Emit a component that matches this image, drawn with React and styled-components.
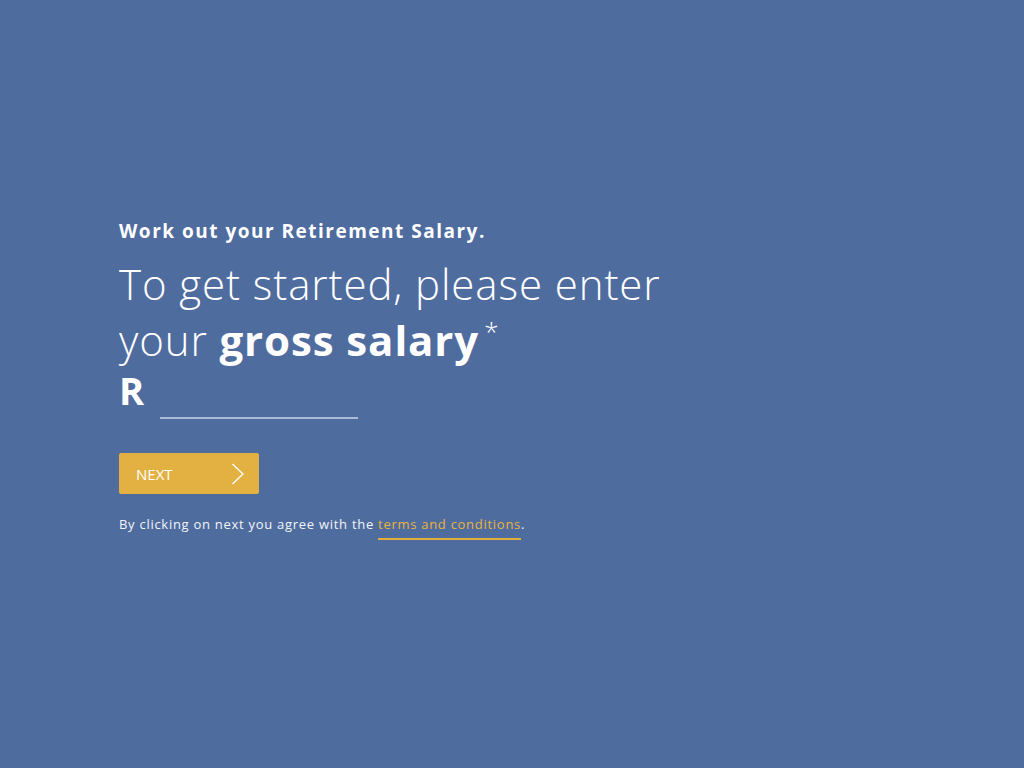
import React from "react";
import styled, { createGlobalStyle } from "styled-components";

const Global = createGlobalStyle`
  html, body { margin: 0; padding: 0; background: #4f6c9f; }
  body { font-family: "Open Sans", "Liberation Sans", sans-serif; color: #fff; }
`;

const Page = styled.main`
  min-height: 768px;
  box-sizing: border-box;
  padding: 218px 0 0 119px;
  display: flex;
  flex-direction: column;
  align-items: flex-start;
`;

const Kicker = styled.h2`
  margin: 0;
  font-size: 19px;
  font-weight: 700;
  letter-spacing: 1.5px;
  line-height: 26px;
`;

const Headline = styled.h1`
  margin: 12px 0 0 0;
  font-size: 42px;
  font-weight: 300;
  line-height: 56px;
  letter-spacing: 0.9px;
  strong { font-weight: 700; letter-spacing: 0.9px; }
  sup { font-size: 26px; font-weight: 300; vertical-align: 15px; line-height: 0; margin-left: 5px; }
`;

const AmountRow = styled.label`
  display: flex;
  align-items: flex-end;
  gap: 16px;
  margin-top: 2px;
`;

const Currency = styled.span`
  font-size: 38px;
  font-weight: 700;
  line-height: 40px;
`;

const AmountInput = styled.input`
  width: 198px;
  height: 30px;
  box-sizing: border-box;
  background: transparent;
  border: none;
  border-bottom: 2px solid #aebbd7;
  color: #fff;
  font: inherit;
  font-size: 22px;
  outline: none;
  padding: 0;
  margin-bottom: -9px;
`;

const NextButton = styled.button`
  margin-top: 43px;
  width: 140px;
  height: 41px;
  background: #e3b042;
  border: none;
  border-radius: 2px;
  color: #fff;
  display: flex;
  align-items: center;
  justify-content: space-between;
  padding: 0 15px 0 17px;
  font-family: "Open Sans", sans-serif;
  font-size: 15px;
  font-weight: 400;
  cursor: pointer;
`;

const Terms = styled.p`
  margin: 21px 0 0;
  font-size: 13px;
  letter-spacing: 0.72px;
  line-height: 18px;
  color: #f2f4f8;
`;

const TermsLink = styled.a`
  color: #e8b340;
  text-decoration: none;
  display: inline-block;
  border-bottom: 2px solid #e3ad3a;
  padding-bottom: 5px;
`;

export default function App() {
  return (
    <>
      <Global />
      <Page>
        <Kicker>Work out your Retirement Salary.</Kicker>
        <Headline>
          To get started, please enter
          <br />
          your <strong>gross salary</strong>
          <sup>*</sup>
        </Headline>
        <AmountRow>
          <Currency>R</Currency>
          <AmountInput type="text" aria-label="gross salary" />
        </AmountRow>
        <NextButton>
          NEXT
          <svg width="13" height="22" viewBox="0 0 13 22" fill="none">
            <path d="M1.5 1 L12 11 L1.5 21" stroke="#fff" strokeWidth="1.3" />
          </svg>
        </NextButton>
        <Terms>
          By clicking on next you agree with the <TermsLink href="#">terms and conditions</TermsLink>.
        </Terms>
      </Page>
    </>
  );
}
